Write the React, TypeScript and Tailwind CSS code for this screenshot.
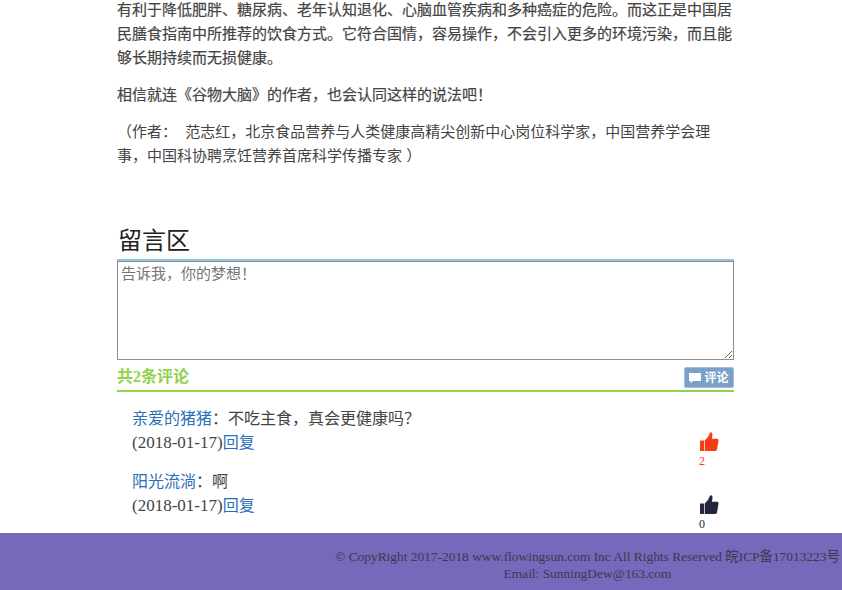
const serif = "font-['Liberation_Serif','Noto_Sans_CJK_SC',serif]";

function ThumbIcon({ className }: { className: string }) {
  return (
    <svg viewBox="0 0 20 20" className={className} fill="currentColor">
      <path d="M1 9.500c0-.6.400-1 1-1h3v10.500H2c-.6 0-1-.4-1-1z" />
      <path d="M5.700 8.500c2-1.800 4-4 4.800-6.700.3-1 1-1.800 2-1.300 1.500.8 1 3.500.3 6.300h5.200c1 0 1.700.9 1.500 1.800l-1.500 9c-.2 1-1 1.400-2 1.400H5.700z" />
    </svg>
  );
}

function Comment({
  author,
  text,
  likes,
  liked,
}: {
  author: string;
  text: string;
  likes: number;
  liked?: boolean;
}) {
  return (
    <div className="relative h-[63px] pl-[15px] text-[16px] leading-[24px] text-[#444]">
      <div>
        <a className="text-[#2a6fb5]">{author}</a>：{text}
      </div>
      <div>
        <span className="text-[17px]">(2018-01-17)</span>
        <a className="text-[#2a6fb5]">回复</a>
      </div>
      <div className={`absolute left-[582px] top-[25px] ${liked ? "text-[#f63c15]" : "text-[#24243e]"}`}>
        <ThumbIcon className="h-[20px] w-[20px]" />
        <div className="mt-[2px] text-[12px] leading-[14px]">{likes}</div>
      </div>
    </div>
  );
}

export default function App() {
  return (
    <div className={`flex h-[590px] w-[842px] flex-col overflow-hidden bg-white ${serif}`}>
      <main className="ml-[117px] w-[617px] flex-1 overflow-hidden">
        {/* Article tail */}
        <div className="font-['Liberation_Sans','Noto_Sans_CJK_SC',sans-serif] text-[15px] leading-[24px] text-[#444]">
          <p className="-mt-[2px] [-webkit-text-stroke:0.2px_#444]">
            有利于降低肥胖、糖尿病、老年认知退化、心脑血管疾病和多种癌症的危险。而这正是中国居民膳食指南中所推荐的饮食方式。它符合国情，容易操作，不会引入更多的环境污染，而且能够长期持续而无损健康。
          </p>
          <p className="mt-[13px] [-webkit-text-stroke:0.2px_#444]">相信就连《谷物大脑》的作者，也会认同这样的说法吧！</p>
          <p className="mt-[13px]">
            （作者： &nbsp;范志红，北京食品营养与人类健康高精尖创新中心岗位科学家，中国营养学会理事，中国科协聘烹饪营养首席科学传播专家 ）
          </p>
        </div>

        {/* Comment box */}
        <h2 className="mt-[56px] pl-px text-[24px] leading-[34px] text-[#222]">留言区</h2>
        <div className="mt-[1px] h-[2px] bg-[#8dc4e8]" />
        <textarea
          className="block h-[99px] w-full border border-[#8e8e8e] px-[3px] py-[2px] text-[15px] leading-[20px] placeholder:text-[#757575]"
          placeholder="告诉我，你的梦想！"
        />
        <div className="flex h-[32px] items-start justify-between border-b-2 border-[#93d14e]">
          <span className="mt-[5px] text-[16px] leading-[24px] font-bold text-[#93d14e]">共2条评论</span>
          <button className="mt-[7px] flex h-[21px] w-[50px] items-center justify-center gap-[3px] rounded-[2px] border border-[#a3bdd9] bg-[#7a9fc9] font-['Liberation_Sans','Noto_Sans_CJK_SC',sans-serif] text-[12px] font-bold text-white">
            <svg viewBox="0 0 12 12" className="h-[12px] w-[12px]" fill="currentColor">
              <path d="M0 1h12v8H4l-2.500 2.500V9H0z" />
            </svg>
            评论
          </button>
        </div>

        <div className="mt-[15px]">
          <Comment author="亲爱的猪猪" text="不吃主食，真会更健康吗？" likes={2} liked />
          <Comment author="阳光流淌" text="啊" likes={0} />
        </div>
      </main>

      <footer className="flex h-[57px] shrink-0 flex-col items-end bg-[#7668bb] pt-[15px] text-[13.400px] leading-[17px] text-[#3a3a4a]">
        <div className="flex w-[509px] flex-col items-center whitespace-nowrap">
          <div>© CopyRight 2017-2018 www.flowingsun.com Inc All Rights Reserved 皖ICP备17013223号</div>
          <div>Email: SunningDew@163.com</div>
        </div>
      </footer>
    </div>
  );
}
